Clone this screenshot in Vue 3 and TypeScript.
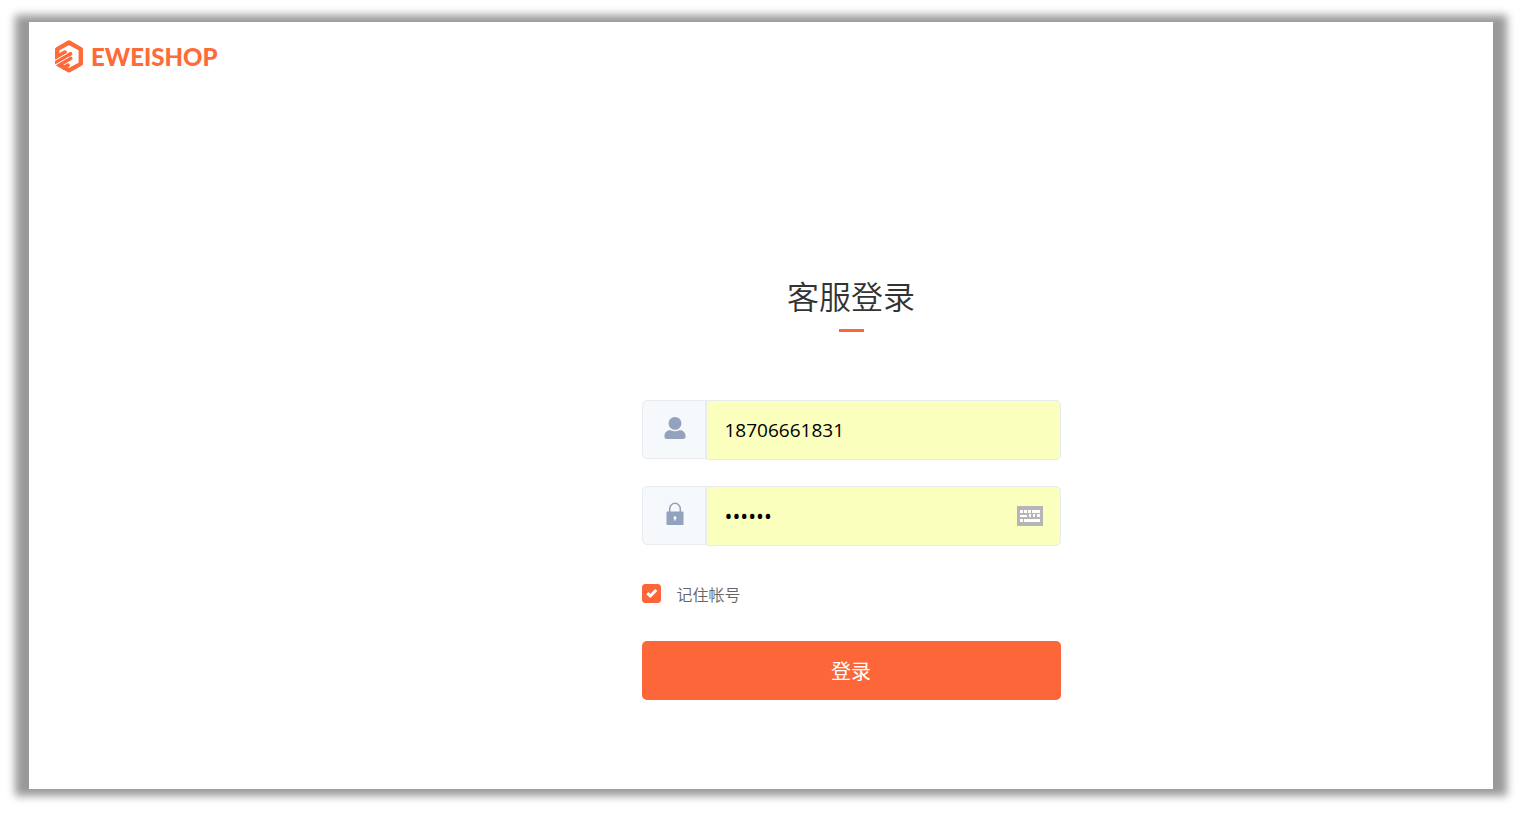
<script setup lang="ts">
import { ref } from 'vue'

const account = ref('18706661831')
const password = ref('123456')
const remember = ref(true)
</script>

<template>
  <div class="page">
    <div class="panel">
      <header class="header">
        <a class="logo" href="#" aria-label="EWEISHOP">
          <svg class="logo-mark" viewBox="0 0 28 33" aria-hidden="true">
            <clipPath id="hexagon">
              <path d="M12.800.6Q14-.1 15.200.6L27 7.400q1 .6 1 1.800v14.600q0 1.200-1 1.800l-11.800 6.600q-1.200.7-2.400 0L1 25.600q-1-.6-1-1.800V9.200Q0 8 1 7.400z" />
            </clipPath>
            <g clip-path="url(#hexagon)" fill="none" stroke="#ff6a39">
              <path d="M2 16V9L14 2.300 26 9v15L14 30.500 4 25" stroke-width="4.800" />
              <g stroke-linecap="round" stroke-width="3.800">
                <path d="M-1 18.500 10 12.200" />
                <path d="M-1 23.200 15.400 13.800" />
                <path d="M3 25.600 15.600 18.400" />
                <path d="M8 28 13 25.200" />
              </g>
              <path d="M-1 21 12.500 13.200M-1 25.700 14 17.100" stroke="#fff" stroke-width="0.900" />
            </g>
          </svg>
          <span class="logo-text">EWEISHOP</span>
        </a>
      </header>

      <main class="main">
        <form class="form" @submit.prevent>
          <h1 class="title">客服登录</h1>

          <div class="field">
            <label class="addon" for="account" aria-label="帐号">
              <svg class="icon" viewBox="0 0 22 24" aria-hidden="true">
                <circle cx="11" cy="7.4" r="6.4" />
                <path d="M4.6 14.2h1.8c2.8 1.5 6.4 1.5 9.2 0h1.8c2.6.9 4.2 3.3 4.2 6 0 1.800-.8 2.800-2.400 2.800H2.800C1.200 23 .4 22 .4 20.200c0-2.700 1.600-5.100 4.200-6z" />
              </svg>
            </label>
            <input id="account" v-model="account" class="input" type="text" autocomplete="off" />
          </div>

          <div class="field">
            <label class="addon" for="password" aria-label="密码">
              <svg class="icon" viewBox="0 0 22 24" aria-hidden="true">
                <path d="M5.700 11V7a5.300 5.700 0 0 1 10.600 0v4" fill="none" stroke="#93a2bd" stroke-width="1.500" />
                <path
                  fill-rule="evenodd"
                  d="M3.500 9.600h15c.6 0 1 .4 1 1v11.300c0 .6-.4 1-1 1h-15c-.6 0-1-.4-1-1V10.600c0-.6.4-1 1-1zM11 14.300a1.500 1.500 0 0 0-.8 2.800v1.400h1.600v-1.400a1.500 1.500 0 0 0-.8-2.800z"
                />
              </svg>
            </label>
            <input id="password" v-model="password" class="input secret" type="password" autocomplete="off" />
            <button class="keyboard" type="button" aria-label="软键盘">
              <svg viewBox="0 0 26 20" aria-hidden="true">
                <path d="M0 0h26v20H0z" fill="#b5b5b5" />
                <path
                  d="M3 4h3v3H3zM7 4h3v3H7zM11 4h3v3h-3zM15 4h8v3h-8zM3 9h7v2H3zM12 8h2v3h-2zM16 8h2v3h-2zM20 8h3v3h-3zM3 13h3v3H3zM7 13h16v3H7z"
                  fill="#fff"
                />
              </svg>
            </button>
          </div>

          <label class="remember">
            <input v-model="remember" class="check" type="checkbox" />
            <svg class="tick" viewBox="0 0 19 19" aria-hidden="true">
              <path d="M5.300 9.200 8.300 12 14.200 6" fill="none" stroke="#fff" stroke-width="3" />
            </svg>
            <span>记住帐号</span>
          </label>

          <button class="submit" type="submit">登录</button>
        </form>
      </main>
    </div>
  </div>
</template>

<style>
body {
  margin: 0;
  background: #fff;
}
</style>

<style scoped>
.page {
  box-sizing: border-box;
  min-height: 100vh;
  padding: 22px 30px 24px 29px;
  display: flex;
  overflow: hidden;
  font-family: "Open Sans", "Noto Sans CJK SC", sans-serif;
}

.panel {
  position: relative;
  z-index: 0;
  flex: 1;
  display: flex;
  flex-direction: column;
}

.panel::before {
  content: "";
  position: absolute;
  inset: -7px -14px;
  z-index: -2;
  background: #999;
  filter: blur(4px);
}

.panel::after {
  content: "";
  position: absolute;
  inset: 0;
  z-index: -1;
  background: #fff;
}

.header {
  display: flex;
  padding: 18px 26px;
}

.logo {
  display: flex;
  align-items: center;
  gap: 8px;
  color: #ff6a39;
  text-decoration: none;
}

.logo-mark {
  width: 28px;
  height: 33px;
}

.logo-text {
  font-family: Lato, sans-serif;
  font-size: 24px;
  font-weight: 900;
  line-height: 32px;
}

.main {
  flex: 1;
  display: flex;
  justify-content: center;
  padding: 182px 0 40px 180px;
}

.form {
  display: flex;
  flex-direction: column;
  width: 419px;
}

.title {
  margin: 0 0 68px;
  color: #333;
  font-family: "Noto Sans CJK SC", sans-serif;
  font-size: 32px;
  font-weight: 350;
  line-height: 44px;
  text-align: center;
}

.title::after {
  content: "";
  display: block;
  width: 25px;
  height: 3px;
  margin: 12px auto 0;
  background: #fc6638;
}

.field {
  position: relative;
  display: flex;
  align-items: flex-start;
  margin-bottom: 26px;
}

.addon {
  box-sizing: border-box;
  display: flex;
  align-items: center;
  justify-content: center;
  width: 64px;
  height: 59px;
  padding: 0 0 3px 2px;
  border: 1px solid #e8ecf0;
  border-radius: 5px 0 0 5px;
  background: #f5f9fc;
}

.icon {
  width: 22px;
  height: 24px;
  fill: #93a2bd;
}

.input {
  box-sizing: border-box;
  flex: 1;
  min-width: 0;
  height: 60px;
  padding: 0 18px;
  border: 1px solid #e8ebee;
  border-radius: 0 5px 5px 0;
  outline: none;
  background: #faffbd;
  color: #000;
  font: 19px "Open Sans", sans-serif;
}

.secret {
  font-size: 21px;
}

.keyboard {
  position: absolute;
  top: 20px;
  right: 18px;
  width: 26px;
  height: 20px;
  padding: 0;
  border: 0;
  background: none;
}

.keyboard svg {
  display: block;
}

.remember {
  position: relative;
  display: flex;
  align-items: center;
  align-self: flex-start;
  gap: 16px;
  height: 19px;
  margin: 12px 0 38px;
  color: #666;
  font-family: "Noto Sans CJK SC", sans-serif;
  font-size: 16px;
  font-weight: 350;
  line-height: 16px;
}

.check {
  appearance: none;
  width: 19px;
  height: 19px;
  margin: 0;
  border: 1px solid #fc6638;
  border-radius: 3px;
}

.check:checked {
  background: #fc6638;
}

.tick {
  position: absolute;
  left: 0;
  width: 19px;
  height: 19px;
  pointer-events: none;
}

.check:not(:checked) + .tick {
  display: none;
}

.submit {
  height: 59px;
  padding: 0;
  border: 0;
  border-radius: 5px;
  background: #fc6638;
  color: #fff;
  font: 20px "Open Sans", "Noto Sans CJK SC", sans-serif;
}
</style>
